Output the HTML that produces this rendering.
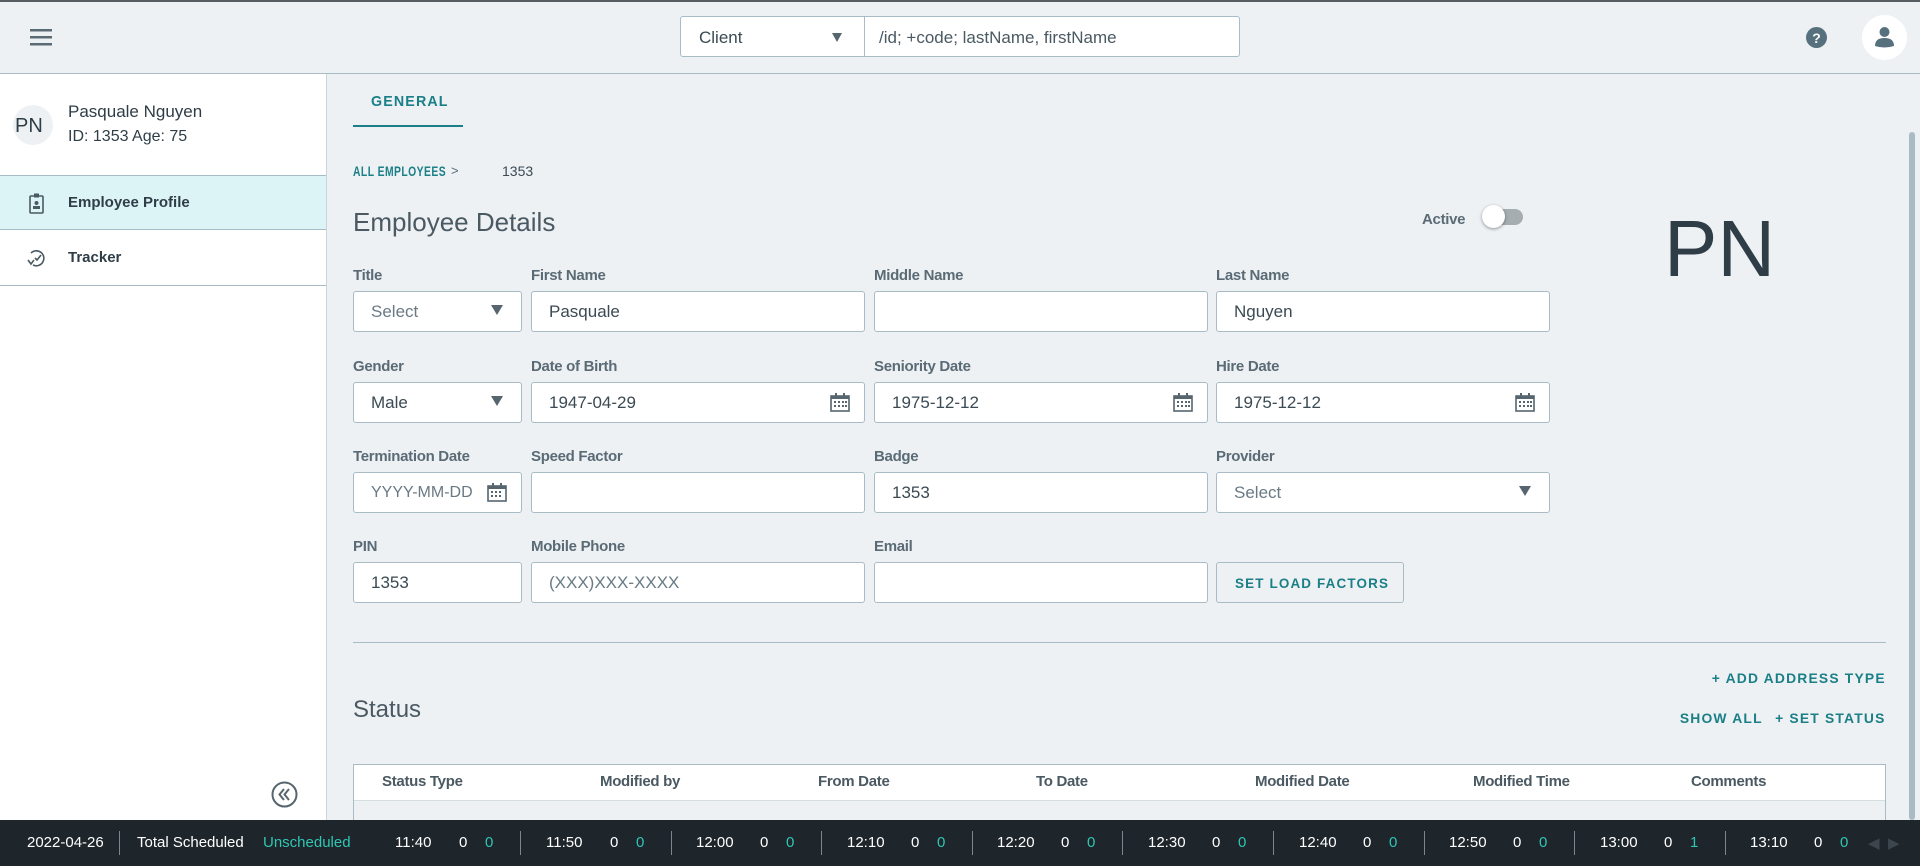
<!DOCTYPE html>
<html><head><meta charset="utf-8"><style>
*{box-sizing:border-box;margin:0;padding:0}
body{width:1920px;height:866px;overflow:hidden;background:#edf1f4;font-family:"Liberation Sans",sans-serif;color:#2f3d46;position:relative}
.a{position:absolute}
.top{left:0;top:0;width:1920px;height:74px;border-top:2px solid #555d63;border-bottom:1px solid #a9bcc6;background:#edf1f4}
.side{left:0;top:74px;width:327px;height:746px;background:#fff;border-right:1px solid #c9d5dc}
.lbl{font-size:15px;color:#5a6b75;font-weight:bold;letter-spacing:-0.3px}
.in{background:#fff;border:1px solid #a9bcc6;border-radius:3px;height:41px;font-size:17px;color:#3b4a53;padding:11px 17px;line-height:18px}
.ph{color:#6a7a84}
.arr{position:absolute;right:18px;top:13px;width:0;height:0;border-left:6px solid transparent;border-right:6px solid transparent;border-top:10px solid #56656e}
.teal{color:#1a7f86;font-weight:bold;letter-spacing:1.2px;font-size:14px;display:inline-block;transform:scaleX(.92);transform-origin:left top;white-space:nowrap}
.tr{transform-origin:right top}
.cal{position:absolute;right:14px;top:10px}
.th{top:773px;font-size:15px;color:#4a5962;font-weight:bold;letter-spacing:-0.3px}
.bb{left:0;top:820px;width:1920px;height:46px;background:#1e252b;color:#fff;font-size:15px}
.bb span{position:absolute;top:14px}
.bb i{position:absolute;top:11px;width:1px;height:24px;background:#7d868c}
.g{color:#2fc6b4}
</style></head><body>
<div class="a top">
 <svg class="a" style="left:30px;top:27px" width="22" height="18"><rect y="0" width="22" height="2.5" fill="#5a6b75"/><rect y="7" width="22" height="2.5" fill="#5a6b75"/><rect y="14" width="22" height="2.5" fill="#5a6b75"/></svg>
 <div class="a" style="left:680px;top:14px;width:560px;height:41px;background:#fff;border:1px solid #a9bcc6;border-radius:3px">
  <span class="a" style="left:18px;top:11px;font-size:17px;color:#3b4a53">Client</span>
  <div class="arr" style="right:auto;left:151px;top:16px;border-top-width:9px;border-left-width:5px;border-right-width:5px"></div>
  <div class="a" style="left:183px;top:0;width:1px;height:39px;background:#a9bcc6"></div>
  <span class="a" style="left:198px;top:11px;font-size:17px;color:#4a5962">/id; +code; lastName, firstName</span>
 </div>
 <svg class="a" style="left:1806px;top:25px" width="21" height="21"><circle cx="10.5" cy="10.5" r="10.5" fill="#56707d"/><text x="10.5" y="16" font-size="14" font-weight="bold" fill="#fff" text-anchor="middle" font-family="Liberation Sans">?</text></svg>
 <div class="a" style="left:1862px;top:13px;width:45px;height:45px;border-radius:50%;background:#fff"></div>
 <svg class="a" style="left:1874px;top:24px" width="21" height="22"><circle cx="10.5" cy="6" r="5" fill="#56707d"/><path d="M1 20 Q1 12 10.5 12 Q20 12 20 20 Q10.5 23 1 20Z" fill="#56707d"/></svg>
</div>
<div class="a side">
 <div class="a" style="left:13px;top:31px;height:40px;border-radius:50%;background:#edf1f4;width:40px"></div>
 <span class="a" style="left:15px;top:41px;font-size:20px;color:#2f3d46">PN</span>
 <span class="a" style="left:68px;top:28px;font-size:17px;color:#2f3d46">Pasquale Nguyen</span>
 <span class="a" style="left:68px;top:54px;font-size:16px;color:#2f3d46">ID: 1353 Age: 75</span>
 <div class="a" style="left:0;top:101px;width:326px;height:55px;background:#ddf4f7;border-top:1px solid #a9bcc6;border-bottom:1px solid #a9bcc6"></div>
 <svg class="a" style="left:29px;top:119px" width="15" height="21"><rect x="1" y="3" width="13" height="17" rx="1" fill="none" stroke="#4a5962" stroke-width="1.6"/><rect x="5" y="0.5" width="5" height="4" fill="#4a5962"/><circle cx="7.5" cy="10" r="2" fill="#4a5962"/><rect x="4" y="13" width="7" height="3" fill="#4a5962"/></svg>
 <span class="a" style="left:68px;top:120px;font-size:15px;font-weight:bold;color:#2f3d46">Employee Profile</span>
 <svg class="a" style="left:27px;top:174px" width="20" height="20"><path d="M4 5 A7.5 7.5 0 1 1 6 17" fill="none" stroke="#4a5962" stroke-width="1.6"/><path d="M1 12 L4 16 L7 12" fill="none" stroke="#4a5962" stroke-width="1.6"/><path d="M8 10 L10 12 L14 7" fill="none" stroke="#4a5962" stroke-width="1.6"/></svg>
 <span class="a" style="left:68px;top:175px;font-size:15px;font-weight:bold;color:#2f3d46">Tracker</span>
 <div class="a" style="left:0;top:211px;width:326px;height:1px;background:#a9bcc6"></div>
 <svg class="a" style="left:271px;top:707px" width="27" height="27"><circle cx="13.5" cy="13.5" r="12" fill="none" stroke="#56656e" stroke-width="2"/><path d="M13 8 L8.5 13.5 L13 19 M18 8 L13.5 13.5 L18 19" fill="none" stroke="#56656e" stroke-width="2"/></svg>
</div>
<div class="a" style="left:1909px;top:132px;width:6px;height:688px;border-radius:3px;background:#a9bcc6"></div>

<span class="a teal" style="left:371px;top:93px;font-size:15px;transform:scaleX(.95)">GENERAL</span>
<div class="a" style="left:353px;top:125px;width:110px;height:2px;background:#1a7f86"></div>
<span class="a teal" style="left:353px;top:163px;font-size:14px;letter-spacing:0.6px;transform:scaleX(.74)">ALL EMPLOYEES</span>
<span class="a" style="left:451px;top:163px;font-size:13px;color:#5a6b75">&gt;</span>
<span class="a" style="left:502px;top:163px;font-size:14px;color:#3b4a53">1353</span>
<span class="a" style="left:353px;top:207px;font-size:26px;color:#4a5962">Employee Details</span>
<span class="a lbl" style="left:1422px;top:211px">Active</span>
<div class="a" style="left:1487px;top:209px;width:36px;height:16px;border-radius:8px;background:#a5adb1"></div>
<div class="a" style="left:1482px;top:205px;width:23px;height:23px;border-radius:50%;background:#fff;box-shadow:0 1px 3px rgba(0,0,0,.4)"></div>
<span class="a" style="left:1664px;top:203px;font-size:80px;color:#2f3d46">PN</span>

<span class="a lbl" style="left:353px;top:267px">Title</span>
<span class="a lbl" style="left:531px;top:267px">First Name</span>
<span class="a lbl" style="left:874px;top:267px">Middle Name</span>
<span class="a lbl" style="left:1216px;top:267px">Last Name</span>
<div class="a in ph" style="left:353px;top:291px;width:169px">Select<div class="arr"></div></div>
<div class="a in" style="left:531px;top:291px;width:334px">Pasquale</div>
<div class="a in" style="left:874px;top:291px;width:334px"></div>
<div class="a in" style="left:1216px;top:291px;width:334px">Nguyen</div>

<span class="a lbl" style="left:353px;top:358px">Gender</span>
<span class="a lbl" style="left:531px;top:358px">Date of Birth</span>
<span class="a lbl" style="left:874px;top:358px">Seniority Date</span>
<span class="a lbl" style="left:1216px;top:358px">Hire Date</span>
<div class="a in" style="left:353px;top:382px;width:169px">Male<div class="arr"></div></div>
<div class="a in" style="left:531px;top:382px;width:334px">1947-04-29<svg class="cal" width="20" height="19"><rect x="1" y="3" width="18" height="15" fill="none" stroke="#56656e" stroke-width="1.6"/><rect x="1" y="3" width="18" height="3" fill="#56656e"/><rect x="5" y="0" width="2" height="4" fill="#56656e"/><rect x="13" y="0" width="2" height="4" fill="#56656e"/><g fill="#56656e"><rect x="4" y="8" width="2" height="2"/><rect x="8" y="8" width="2" height="2"/><rect x="12" y="8" width="2" height="2"/><rect x="4" y="12" width="2" height="2"/><rect x="8" y="12" width="2" height="2"/><rect x="12" y="12" width="2" height="2"/><rect x="15" y="12" width="2" height="2"/><rect x="15" y="8" width="2" height="2"/></g></svg></div>
<div class="a in" style="left:874px;top:382px;width:334px">1975-12-12<svg class="cal" width="20" height="19"><rect x="1" y="3" width="18" height="15" fill="none" stroke="#56656e" stroke-width="1.6"/><rect x="1" y="3" width="18" height="3" fill="#56656e"/><rect x="5" y="0" width="2" height="4" fill="#56656e"/><rect x="13" y="0" width="2" height="4" fill="#56656e"/><g fill="#56656e"><rect x="4" y="8" width="2" height="2"/><rect x="8" y="8" width="2" height="2"/><rect x="12" y="8" width="2" height="2"/><rect x="4" y="12" width="2" height="2"/><rect x="8" y="12" width="2" height="2"/><rect x="12" y="12" width="2" height="2"/><rect x="15" y="12" width="2" height="2"/><rect x="15" y="8" width="2" height="2"/></g></svg></div>
<div class="a in" style="left:1216px;top:382px;width:334px">1975-12-12<svg class="cal" width="20" height="19"><rect x="1" y="3" width="18" height="15" fill="none" stroke="#56656e" stroke-width="1.6"/><rect x="1" y="3" width="18" height="3" fill="#56656e"/><rect x="5" y="0" width="2" height="4" fill="#56656e"/><rect x="13" y="0" width="2" height="4" fill="#56656e"/><g fill="#56656e"><rect x="4" y="8" width="2" height="2"/><rect x="8" y="8" width="2" height="2"/><rect x="12" y="8" width="2" height="2"/><rect x="4" y="12" width="2" height="2"/><rect x="8" y="12" width="2" height="2"/><rect x="12" y="12" width="2" height="2"/><rect x="15" y="12" width="2" height="2"/><rect x="15" y="8" width="2" height="2"/></g></svg></div>

<span class="a lbl" style="left:353px;top:448px">Termination Date</span>
<span class="a lbl" style="left:531px;top:448px">Speed Factor</span>
<span class="a lbl" style="left:874px;top:448px">Badge</span>
<span class="a lbl" style="left:1216px;top:448px">Provider</span>
<div class="a in ph" style="left:353px;top:472px;width:169px;font-size:16px">YYYY-MM-DD<svg class="cal" style="right:14px" width="20" height="19"><rect x="1" y="3" width="18" height="15" fill="none" stroke="#56656e" stroke-width="1.6"/><rect x="1" y="3" width="18" height="3" fill="#56656e"/><rect x="5" y="0" width="2" height="4" fill="#56656e"/><rect x="13" y="0" width="2" height="4" fill="#56656e"/><g fill="#56656e"><rect x="4" y="8" width="2" height="2"/><rect x="8" y="8" width="2" height="2"/><rect x="12" y="8" width="2" height="2"/><rect x="4" y="12" width="2" height="2"/><rect x="8" y="12" width="2" height="2"/><rect x="12" y="12" width="2" height="2"/></g></svg></div>
<div class="a in" style="left:531px;top:472px;width:334px"></div>
<div class="a in" style="left:874px;top:472px;width:334px">1353</div>
<div class="a in ph" style="left:1216px;top:472px;width:334px">Select<div class="arr"></div></div>

<span class="a lbl" style="left:353px;top:538px">PIN</span>
<span class="a lbl" style="left:531px;top:538px">Mobile Phone</span>
<span class="a lbl" style="left:874px;top:538px">Email</span>
<div class="a in" style="left:353px;top:562px;width:169px">1353</div>
<div class="a in ph" style="left:531px;top:562px;width:334px">(XXX)XXX-XXXX</div>
<div class="a in" style="left:874px;top:562px;width:334px"></div>
<div class="a" style="left:1216px;top:562px;width:188px;height:41px;border:1px solid #a9bcc6;border-radius:3px"><span class="teal" style="position:absolute;left:18px;top:12px;transform:scaleX(.96)">SET LOAD FACTORS</span></div>

<div class="a" style="left:353px;top:642px;width:1533px;height:1px;background:#a9bcc6"></div>
<span class="a teal tr" style="right:34px;top:670px;transform:scaleX(.99)">+ ADD ADDRESS TYPE</span>
<span class="a" style="left:353px;top:696px;font-size:24px;color:#4a5962">Status</span>
<span class="a teal tr" style="right:157px;top:710px;transform:scaleX(.99)">SHOW ALL</span>
<span class="a teal tr" style="right:34px;top:710px;transform:scaleX(.99)">+ SET STATUS</span>

<div class="a" style="left:353px;top:764px;width:1533px;height:56px;background:#edf1f4;border:1px solid #a9bcc6;border-bottom:none"></div>
<div class="a" style="left:354px;top:765px;width:1531px;height:36px;background:#fff;border-bottom:1px solid #d4dde2"></div>
<span class="a th" style="left:382px">Status Type</span>
<span class="a th" style="left:600px">Modified by</span>
<span class="a th" style="left:818px">From Date</span>
<span class="a th" style="left:1036px">To Date</span>
<span class="a th" style="left:1255px">Modified Date</span>
<span class="a th" style="left:1473px">Modified Time</span>
<span class="a th" style="left:1691px">Comments</span>

<div class="a bb">
<span style="left:27px">2022-04-26</span><i style="left:119px"></i>
<span style="left:137px">Total Scheduled</span><span class="g" style="left:263px">Unscheduled</span>
<span style="left:395px">11:40</span><span style="left:459px">0</span><span class="g" style="left:485px">0</span><i style="left:520px"></i>
<span style="left:546px">11:50</span><span style="left:610px">0</span><span class="g" style="left:636px">0</span><i style="left:671px"></i>
<span style="left:696px">12:00</span><span style="left:760px">0</span><span class="g" style="left:786px">0</span><i style="left:821px"></i>
<span style="left:847px">12:10</span><span style="left:911px">0</span><span class="g" style="left:937px">0</span><i style="left:972px"></i>
<span style="left:997px">12:20</span><span style="left:1061px">0</span><span class="g" style="left:1087px">0</span><i style="left:1122px"></i>
<span style="left:1148px">12:30</span><span style="left:1212px">0</span><span class="g" style="left:1238px">0</span><i style="left:1273px"></i>
<span style="left:1299px">12:40</span><span style="left:1363px">0</span><span class="g" style="left:1389px">0</span><i style="left:1424px"></i>
<span style="left:1449px">12:50</span><span style="left:1513px">0</span><span class="g" style="left:1539px">0</span><i style="left:1574px"></i>
<span style="left:1600px">13:00</span><span style="left:1664px">0</span><span class="g" style="left:1690px">1</span><i style="left:1725px"></i>
<span style="left:1750px">13:10</span><span style="left:1814px">0</span><span class="g" style="left:1840px">0</span>
<span style="left:1868px;color:#3d464c">&#9664;</span><span style="left:1888px;color:#3d464c">&#9654;</span>
</div>
</body></html>
